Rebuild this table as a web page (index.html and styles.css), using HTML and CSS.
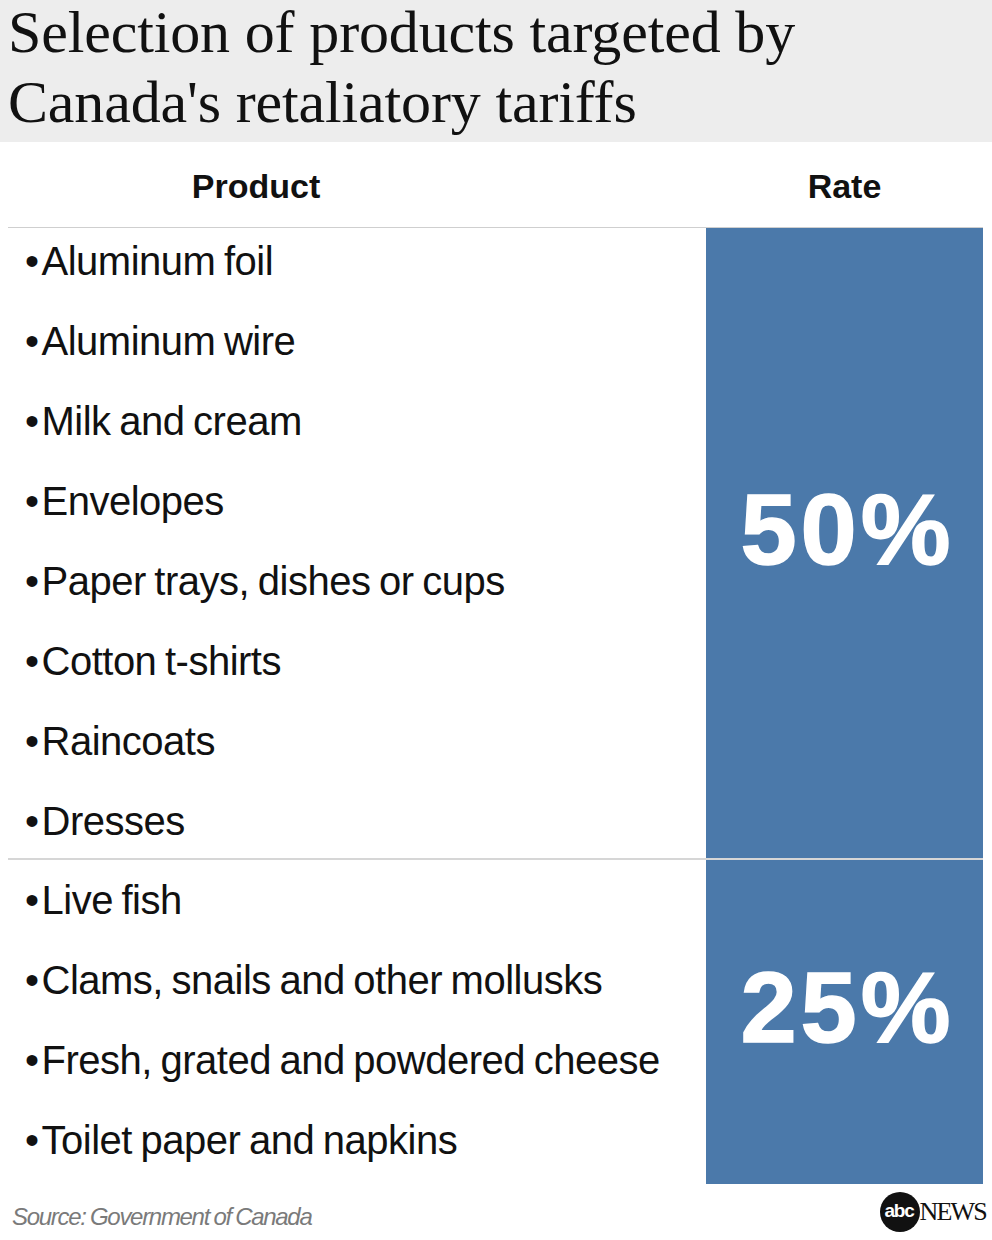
FILE: index.html
```html
<!DOCTYPE html>
<html lang="en">
<head>
<meta charset="utf-8">
<title>Selection of products targeted by Canada's retaliatory tariffs</title>
<link rel="stylesheet" href="styles.css">
</head>
<body>
<header class="title-band">
  <h1 class="title">Selection of products targeted by<br>Canada's retaliatory tariffs</h1>
</header>
<section class="table">
  <div class="thead">
    <div class="th th-product">Product</div>
    <div class="th th-rate">Rate</div>
  </div>
  <div class="group group-50">
    <ul class="items">
      <li>Aluminum foil</li>
      <li>Aluminum wire</li>
      <li>Milk and cream</li>
      <li>Envelopes</li>
      <li>Paper trays, dishes or cups</li>
      <li>Cotton t-shirts</li>
      <li>Raincoats</li>
      <li>Dresses</li>
    </ul>
    <div class="rate rate-50">50%</div>
  </div>
  <div class="group group-25">
    <ul class="items">
      <li>Live fish</li>
      <li>Clams, snails and other mollusks</li>
      <li>Fresh, grated and powdered cheese</li>
      <li>Toilet paper and napkins</li>
    </ul>
    <div class="rate rate-25">25%</div>
  </div>
</section>
<footer class="foot">
  <span class="source">Source: Government of Canada</span>
  <div class="logo">
    <span class="logo-circle">abc</span><span class="logo-news">NEWS</span>
  </div>
</footer>
</body>
</html>
```
FILE: styles.css
```css
* { box-sizing: border-box; }
html, body { margin: 0; padding: 0; background: #fff; }
body { width: 992px; height: 1240px; overflow: hidden; font-family: "Liberation Sans", Arial, sans-serif; color: #111; }

.title-band {
  background: #ededed;
  height: 142px;
  padding: 0 8px;
  overflow: hidden;
}
.title {
  margin: -3px 0 0 0;
  font-family: "Liberation Serif", "Times New Roman", serif;
  font-weight: normal;
  font-size: 60px;
  line-height: 70px;
  letter-spacing: -0.15px;
  color: #111;
}

.table { margin: 0 9px 0 8px; }

.thead {
  display: flex;
  height: 86px;
  border-bottom: 1px solid #cfcfcf;
}
.th {
  font-weight: bold;
  font-size: 34px;
  line-height: 80px;
  padding-top: 4px;
  text-align: center;
  color: #111;
}
.th-product { width: 496px; }
.th-rate { margin-left: auto; width: 277px; }

.group { display: flex; }
.group-50 { height: 630px; }
.group-25 { height: 326px; border-top: 2px solid #d6d6d6; }

.items {
  list-style: none;
  margin: 0;
  padding: 0 0 0 17px;
  flex: 1;
  font-size: 40px;
  line-height: 80px;
  letter-spacing: -0.5px;
  word-spacing: -2px;
  white-space: nowrap;
}
.items li::before {
  content: "•";
  margin-right: 3px;
}
.group-50 .items { margin-top: -7px; }

.rate {
  width: 277px;
  background: #4b79aa;
  color: #fff;
  font-weight: bold;
  font-size: 101px;
  letter-spacing: 4px;
  padding-left: 6px;
  display: flex;
  align-items: center;
  justify-content: center;
  -webkit-text-stroke: 1.5px #fff;
}
.rate-50 { padding-bottom: 28px; }
.rate-25 { padding-bottom: 30px; }

.foot {
  display: flex;
  justify-content: space-between;
  align-items: flex-start;
  height: 56px;
  padding: 0 6px 0 12px;
}
.source {
  margin-top: 19px;
  font-style: italic;
  font-size: 24px;
  line-height: 28px;
  letter-spacing: -1.3px;
  word-spacing: -1px;
  color: #7a7a7a;
}
.logo {
  display: flex;
  align-items: center;
  margin-top: 8px;
}
.logo-circle {
  width: 40px;
  height: 40px;
  border-radius: 50%;
  background: #111;
  color: #fff;
  font-weight: bold;
  font-size: 19px;
  letter-spacing: -1.2px;
  line-height: 38px;
  text-align: center;
  padding-right: 1px;
}
.logo-news {
  font-family: "Liberation Serif", "Times New Roman", serif;
  font-size: 26px;
  letter-spacing: -1.8px;
  color: #111;
  line-height: 40px;
}
```
